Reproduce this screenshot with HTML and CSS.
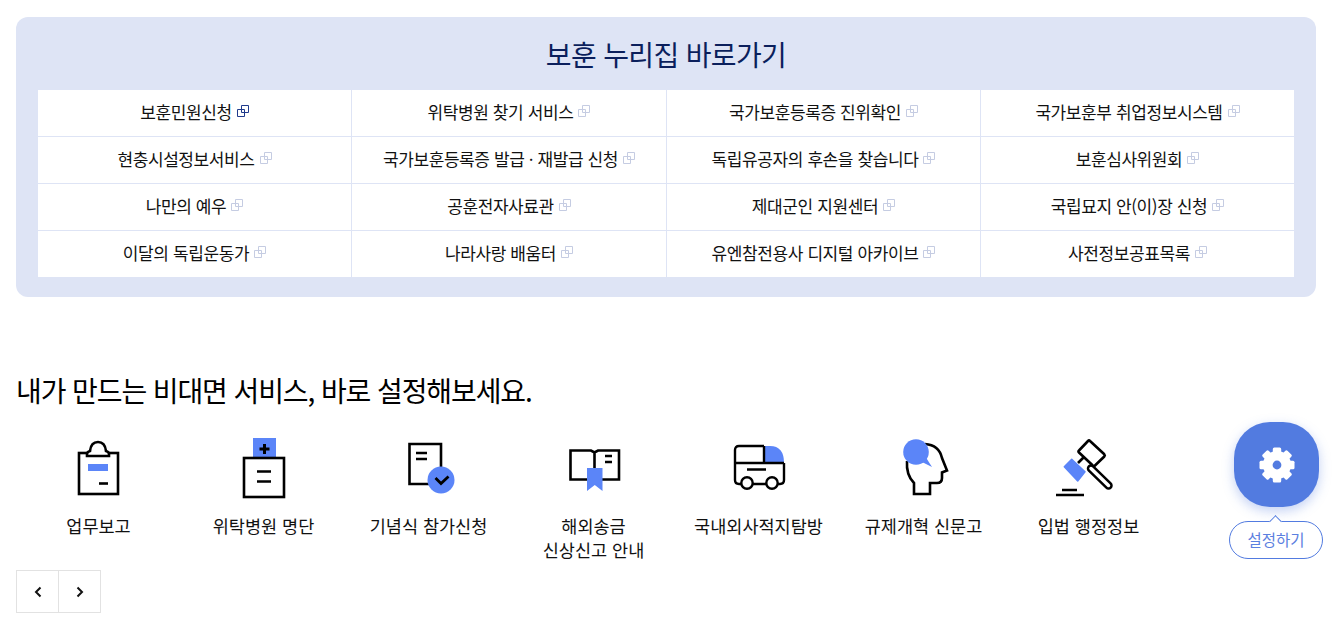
FILE: index.html
```html
<!DOCTYPE html>
<html lang="ko">
<head>
  <meta charset="utf-8">
  <title>보훈 누리집 바로가기</title>
  <link rel="stylesheet" href="styles.css">
</head>
<body>
  <svg class="sprite" width="0" height="0">
    <symbol id="ext" viewBox="0 0 12 12">
      <path d="M4.500 .5h7v7h-7zM.5 4.500h7v7h-7z" fill="none" stroke="currentColor"/>
    </symbol>
  </svg>

  <section class="shortcut">
    <h2 class="shortcut-title">보훈 누리집 바로가기</h2>
    <div class="shortcut-grid">
      <a class="cell active">보훈민원신청<svg class="ext"><use href="#ext"/></svg></a>
      <a class="cell">위탁병원 찾기 서비스<svg class="ext"><use href="#ext"/></svg></a>
      <a class="cell">국가보훈등록증 진위확인<svg class="ext"><use href="#ext"/></svg></a>
      <a class="cell">국가보훈부 취업정보시스템<svg class="ext"><use href="#ext"/></svg></a>
      <a class="cell">현충시설정보서비스<svg class="ext"><use href="#ext"/></svg></a>
      <a class="cell">국가보훈등록증 발급 · 재발급 신청<svg class="ext"><use href="#ext"/></svg></a>
      <a class="cell">독립유공자의 후손을 찾습니다<svg class="ext"><use href="#ext"/></svg></a>
      <a class="cell">보훈심사위원회<svg class="ext"><use href="#ext"/></svg></a>
      <a class="cell">나만의 예우<svg class="ext"><use href="#ext"/></svg></a>
      <a class="cell">공훈전자사료관<svg class="ext"><use href="#ext"/></svg></a>
      <a class="cell">제대군인 지원센터<svg class="ext"><use href="#ext"/></svg></a>
      <a class="cell">국립묘지 안(이)장 신청<svg class="ext"><use href="#ext"/></svg></a>
      <a class="cell">이달의 독립운동가<svg class="ext"><use href="#ext"/></svg></a>
      <a class="cell">나라사랑 배움터<svg class="ext"><use href="#ext"/></svg></a>
      <a class="cell">유엔참전용사 디지털 아카이브<svg class="ext"><use href="#ext"/></svg></a>
      <a class="cell">사전정보공표목록<svg class="ext"><use href="#ext"/></svg></a>
    </div>
  </section>

  <section class="service">
    <h2 class="service-title">내가 만드는 비대면 서비스, 바로 설정해보세요.</h2>
    <ul class="service-list">
      <li class="service-item">
        <svg class="service-icon" viewBox="0 0 65 64">
          <rect x="13" y="17" width="39" height="41" fill="none" stroke="#000" stroke-width="2.600"/>
          <path d="M21 20h22v-2q0-2-3-3q-1-9-8-9t-8 9q-3 1-3 3z" fill="#fff" stroke="#000" stroke-width="2.600"/>
          <rect x="22" y="28" width="20" height="7" fill="#5b85f8"/>
          <path d="M33 47.500h9" stroke="#000" stroke-width="2.600"/>
        </svg>
        <span>업무보고</span>
      </li>
      <li class="service-item">
        <svg class="service-icon" viewBox="0 0 65 64">
          <rect x="22" y="2" width="23" height="20" fill="#5b85f8"/>
          <path d="M33.500 8v10M28.500 13h10" stroke="#000" stroke-width="3"/>
          <rect x="13" y="22" width="40" height="39" fill="none" stroke="#000" stroke-width="2.600"/>
          <path d="M26 35.500h14M26 45.500h14" stroke="#000" stroke-width="2.600"/>
        </svg>
        <span>위탁병원 명단</span>
      </li>
      <li class="service-item">
        <svg class="service-icon" viewBox="0 0 65 64">
          <path d="M45 48H13.500V8H45v36" fill="none" stroke="#000" stroke-width="2.600"/>
          <path d="M20 17h11M20 23h11" stroke="#000" stroke-width="2.600"/>
          <circle cx="45" cy="44" r="13.500" fill="#5b85f8"/>
          <path d="M39.500 42l5.500 5.500l7.500-7" fill="none" stroke="#000" stroke-width="2.800"/>
        </svg>
        <span>기념식 참가신청</span>
      </li>
      <li class="service-item">
        <svg class="service-icon" viewBox="0 0 65 64">
          <path d="M9.500 14.500H30l3.500 2l3.500-2h21v29H9.500zM33.500 16.500V44" fill="none" stroke="#000" stroke-width="2.600"/>
          <path d="M44 20h7M44 26h7" stroke="#000" stroke-width="2.600"/>
          <path d="M26 32h15.500v23l-7.750-6L26 55z" fill="#5b85f8"/>
        </svg>
        <span>해외송금<br>신상신고 안내</span>
      </li>
      <li class="service-item">
        <svg class="service-icon" viewBox="0 0 65 64">
          <path d="M38 10h6q14 0 14 17H38z" fill="#5b85f8"/>
          <path d="M38 10H13q-4 0-4 4v30q0 4 4 4h41q4 0 4-4V27M38 10v17M9 27h49M21 33.500h19" fill="none" stroke="#000" stroke-width="2.400"/>
          <circle cx="21" cy="47" r="5.700" fill="#fff" stroke="#000" stroke-width="2.400"/>
          <circle cx="46" cy="47" r="5.700" fill="#fff" stroke="#000" stroke-width="2.400"/>
        </svg>
        <span>국내외사적지탐방</span>
      </li>
      <li class="service-item">
        <svg class="service-icon" viewBox="0 0 65 64">
          <path d="M34 8q14 1 17 14l5 12.500l-5 2V42q0 5-5 5h-7v11H23V47q-8-8-7-22" fill="none" stroke="#000" stroke-width="2.600"/>
          <circle cx="25" cy="16" r="12.800" fill="#5b85f8"/>
          <path d="M34 20l-3 6l10 5z" fill="#5b85f8"/>
        </svg>
        <span>규제개혁 신문고</span>
      </li>
      <li class="service-item">
        <svg class="service-icon" viewBox="0 0 65 64">
          <path d="M35 32.500l17.500 17" stroke="#000" stroke-width="8.500" stroke-linecap="round"/>
          <path d="M35 32.500l17.500 17" stroke="#fff" stroke-width="3.500" stroke-linecap="round"/>
          <path d="M22 27l10-10" stroke="#000" stroke-width="2.600"/>
          <path d="M34 5l14.300 13.300q1 1 0 2.200L39 29.500q-1 1-2.200 0L23 16.500q-1-1 0-2L32 5q1-1 2 0z" fill="#fff" stroke="#000" stroke-width="2.600"/>
          <path d="M15.700 23.300L29 35.700L21.700 45L8.300 30.700z" fill="#5b85f8" stroke="#5b85f8" stroke-width="1.500" stroke-linejoin="round"/>
          <path d="M0 59h28M6 54h15" stroke="#000" stroke-width="2.600"/>
        </svg>
        <span>입법 행정정보</span>
      </li>
    </ul>
    <div class="pager">
      <button class="pager-btn" type="button" aria-label="이전">
        <svg width="10" height="12" viewBox="0 0 10 12"><path d="M7.500 1.500L3 6l4.500 4.500" fill="none" stroke="#111" stroke-width="2"/></svg>
      </button>
      <button class="pager-btn" type="button" aria-label="다음">
        <svg width="10" height="12" viewBox="0 0 10 12"><path d="M2.500 1.500L7 6l-4.500 4.500" fill="none" stroke="#111" stroke-width="2"/></svg>
      </button>
    </div>
  </section>

  <div class="setting">
    <button class="setting-btn" type="button" aria-label="설정">
      <svg width="38" height="38" viewBox="0 0 38 38">
        <circle cx="19" cy="19" r="14" fill="#fff"/>
        <g fill="#fff">
          <rect x="14.800" y="1.500" width="8.400" height="35" rx="1.500"/>
          <rect x="14.800" y="1.500" width="8.400" height="35" rx="1.500" transform="rotate(45 19 19)"/>
          <rect x="14.800" y="1.500" width="8.400" height="35" rx="1.500" transform="rotate(90 19 19)"/>
          <rect x="14.800" y="1.500" width="8.400" height="35" rx="1.500" transform="rotate(135 19 19)"/>
        </g>
        <circle cx="19" cy="19" r="4.400" fill="#527be0"/>
      </svg>
    </button>
    <span class="setting-label">설정하기</span>
  </div>
</body>
</html>
```

FILE: styles.css
```css
* {
  box-sizing: border-box;
}
html, body {
  height: 625px;
  overflow: hidden;
}
body {
  margin: 0;
  padding: 17px 26px 0 16px;
  background: #fff;
  color: #111;
  font-family: "Noto Sans CJK KR", "Noto Sans", sans-serif;
}
h2 {
  margin: 0;
  font-weight: 400;
}
.sprite {
  display: block;
  height: 0;
}
.shortcut {
  height: 280px;
  padding: 0 22px;
  background-color: #dee4f5;
  border-radius: 12px;
}
.shortcut-title {
  height: 73px;
  padding-top: 15px;
  text-align: center;
  color: #0b1f5c;
  font-size: 28px;
  line-height: 44px;
  letter-spacing: -0.65px;
}
.shortcut-grid {
  display: grid;
  grid-template-columns: 314px 315px 314px 1fr;
  grid-template-rows: repeat(3, 47px) 46px;
  background: #fff;
}
.cell {
  display: flex;
  justify-content: center;
  align-items: center;
  padding-bottom: 4px;
  border-right: 1px solid #dee4f5;
  border-bottom: 1px solid #dee4f5;
  font-size: 17px;
  letter-spacing: -0.4px;
  color: #111;
  white-space: nowrap;
}
.cell:nth-child(4n) {
  border-right: none;
}
.cell:nth-last-child(-n+4) {
  border-bottom: none;
}
.ext {
  width: 12px;
  height: 12px;
  margin-left: 5px;
  color: #c5cce2;
}
.active .ext {
  color: #1f3a8c;
}
.service {
  padding-top: 71px;
}
.service-title {
  font-size: 28px;
  line-height: 44px;
  letter-spacing: -1.1px;
  color: #000;
}
.service-list {
  display: flex;
  margin: 24px 0 0;
  padding: 0;
  list-style: none;
}
.service-item {
  width: 165px;
  height: 134px;
  text-align: center;
  font-size: 17.5px;
  line-height: 24px;
  color: #111;
}
.service-item span {
  display: block;
  margin-top: 14px;
}
.service-icon {
  display: block;
  width: 65px;
  height: 64px;
  margin: 0 auto;
}
.pager {
  display: flex;
  width: 85px;
  border: 1px solid #e2e2e2;
}
.pager-btn {
  display: flex;
  justify-content: center;
  align-items: center;
  width: 41px;
  height: 41px;
  padding: 0;
  border: none;
  background: #fff;
}
.pager-btn + .pager-btn {
  width: 42px;
  border-left: 1px solid #e2e2e2;
}
.setting {
  position: absolute;
  top: 422px;
  left: 1229px;
  width: 94px;
  text-align: center;
}
.setting-btn {
  display: flex;
  justify-content: center;
  align-items: center;
  width: 85px;
  height: 85px;
  margin: 0 0 14px 5px;
  padding: 0;
  border: none;
  border-radius: 36px;
  background-color: #527be0;
  box-shadow: 0 4px 12px rgba(82, 123, 224, 0.35);
}
.setting-label {
  position: relative;
  display: block;
  height: 38px;
  border: 1px solid #527be0;
  border-radius: 19px;
  background: #fff;
  color: #5b80e0;
  font-size: 15.5px;
  line-height: 35px;
}
.setting-label::before {
  content: "";
  position: absolute;
  top: -5px;
  left: 41px;
  width: 8px;
  height: 8px;
  border-top: 1px solid #527be0;
  border-left: 1px solid #527be0;
  background: #fff;
  transform: rotate(45deg);
}
```
